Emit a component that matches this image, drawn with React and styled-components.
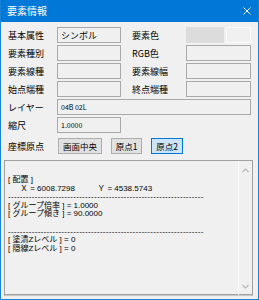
import React from "react";
import styled, { createGlobalStyle } from "styled-components";

const Global = createGlobalStyle`
  html, body { margin: 0; padding: 0; background: #f0f0f0; }
  * { box-sizing: border-box; }
`;

const Window = styled.div`
  width: 259px;
  height: 300px;
  border: 1px solid #1883d7;
  border-top: none;
  background: #f0f0f0;
  display: flex;
  flex-direction: column;
  font-family: "Noto Sans CJK JP", sans-serif;
  color: #000;
  overflow: hidden;
`;

const TitleBar = styled.div`
  height: 22px;
  margin: 0 -1px;
  background: #0078d7;
  display: flex;
  align-items: center;
  justify-content: space-between;
  padding: 0 8px 0 7px;
  flex: none;
`;

const Title = styled.span`
  color: #fff;
  font-size: 10px;
  line-height: 1;
`;

const Body = styled.div`
  flex: 1;
  display: flex;
  flex-direction: column;
  padding: 5px 5px 3px 3px;
`;

const Grid = styled.div`
  margin-left: 4px;
  display: grid;
  grid-template-columns: 49px 64px 65px 65px;
  grid-auto-rows: 16px;
  row-gap: 2px;
`;

const Label = styled.div`
  font-size: 9px;
  display: flex;
  align-items: center;
  padding-left: ${(p) => (p.$indent ? "11px" : "0")};
  width: ${(p) => (p.$w ? `${p.$w}px` : "auto")};
  white-space: nowrap;
`;

const Field = styled.div`
  border: 1px solid #a9a9a9;
  background: #f0f0f0;
  font-size: ${(p) => (p.$small ? "7px" : "9px")};
  display: flex;
  align-items: center;
  padding-left: 3px;
  grid-column: ${(p) => p.$span || "auto"};
  white-space: nowrap;
`;

const Swatch = styled.div`
  display: flex;
  gap: 2px;
`;

const ColorBlock = styled.div`
  width: 38px;
  background: #dcdcdc;
`;

const ColorBox = styled.div`
  flex: 1;
  border: 1px solid #fafafa;
  background: #f0f0f0;
`;

const ButtonRow = styled.div`
  margin-top: 5px;
  margin-left: 4px;
  display: flex;
  align-items: center;
  height: 16px;
`;

const ButtonGroup = styled.div`
  margin-left: 1px;
  display: flex;
  gap: 9px;
  height: 16px;
`;

const Button = styled.div`
  width: ${(p) => p.$w}px;
  height: 16px;
  border: 1px solid ${(p) => (p.$active ? "#0078d7" : "#adadad")};
  background: ${(p) => (p.$active ? "#cce4f7" : "#e1e1e1")};
  font-size: 8.5px;
  display: flex;
  align-items: center;
  justify-content: center;
  white-space: nowrap;
`;

const TextBox = styled.div`
  margin-top: 6px;
  height: 136px;
  border: 1px solid #a0a0a0;
  border-bottom-color: #c8c8c8;
  box-shadow: inset 0 -1px 0 #a0a0a0;
  display: flex;
  background: #f0f0f0;
`;

const Content = styled.div`
  flex: 1;
  padding: 15px 0 0 3px;
  font-family: "Liberation Sans", "Noto Sans CJK JP", sans-serif;
  font-size: 8px;
  line-height: 8.6px;
  overflow: hidden;
`;

const Line = styled.div`
  white-space: pre;
  height: 8.6px;
  padding-left: ${(p) => p.$indent || 0}px;
  letter-spacing: ${(p) => (p.$dash ? "0.3px" : "0")};
`;

const Scrollbar = styled.div`
  width: 14px;
  border-left: 1px solid #fafafa;
  display: flex;
  flex-direction: column;
  justify-content: space-between;
  align-items: center;
  padding: 7px 0 6px;
`;

const Chevron = ({ down }) => (
  <svg width="7" height="5" viewBox="0 0 7 5">
    <path
      d={down ? "M0.5 1 L3.5 4 L6.5 1" : "M0.5 4 L3.5 1 L6.5 4"}
      fill="none"
      stroke="#b8b8b8"
      strokeWidth="1.2"
    />
  </svg>
);

const CloseIcon = () => (
  <svg width="8" height="8" viewBox="0 0 8 8">
    <path d="M0.5 0.5 L7.5 7.5 M7.5 0.5 L0.5 7.5" stroke="#fff" strokeWidth="1" />
  </svg>
);

const DASH = "-".repeat(66);

export default function App() {
  return (
    <>
      <Global />
      <Window>
        <TitleBar>
          <Title>要素情報</Title>
          <CloseIcon />
        </TitleBar>
        <Body>
          <Grid>
            <Label>基本属性</Label>
            <Field>シンボル</Field>
            <Label $indent>要素色</Label>
            <Swatch>
              <ColorBlock />
              <ColorBox />
            </Swatch>

            <Label>要素種別</Label>
            <Field />
            <Label $indent>RGB色</Label>
            <Field />

            <Label>要素線種</Label>
            <Field />
            <Label $indent>要素線幅</Label>
            <Field />

            <Label>始点端種</Label>
            <Field />
            <Label $indent>終点端種</Label>
            <Field />

            <Label>レイヤー</Label>
            <Field $span="2 / 5" $small>04B 02L</Field>

            <Label>縮尺</Label>
            <Field $small>1.0000</Field>
          </Grid>
          <ButtonRow>
            <Label $w={49}>座標原点</Label>
            <ButtonGroup>
              <Button $w={44}>画面中央</Button>
              <Button $w={31}>原点1</Button>
              <Button $w={32} $active>原点2</Button>
            </ButtonGroup>
          </ButtonRow>
          <TextBox>
            <Content>
              <Line>[ 配置 ]</Line>
              <Line $indent={12}>{"Ｘ = 6008.7298          Ｙ = 4538.5743"}</Line>
              <Line $dash>{DASH}</Line>
              <Line>{"[ グループ倍率 ] = 1.0000"}</Line>
              <Line>{"[ グループ傾き ] = 90.0000"}</Line>
              <Line> </Line>
              <Line $dash>{DASH}</Line>
              <Line>{"[ 塗潰Zレベル ] = 0"}</Line>
              <Line>{"[ 隠線Zレベル ] = 0"}</Line>
            </Content>
            <Scrollbar>
              <Chevron />
              <Chevron down />
            </Scrollbar>
          </TextBox>
        </Body>
      </Window>
    </>
  );
}
